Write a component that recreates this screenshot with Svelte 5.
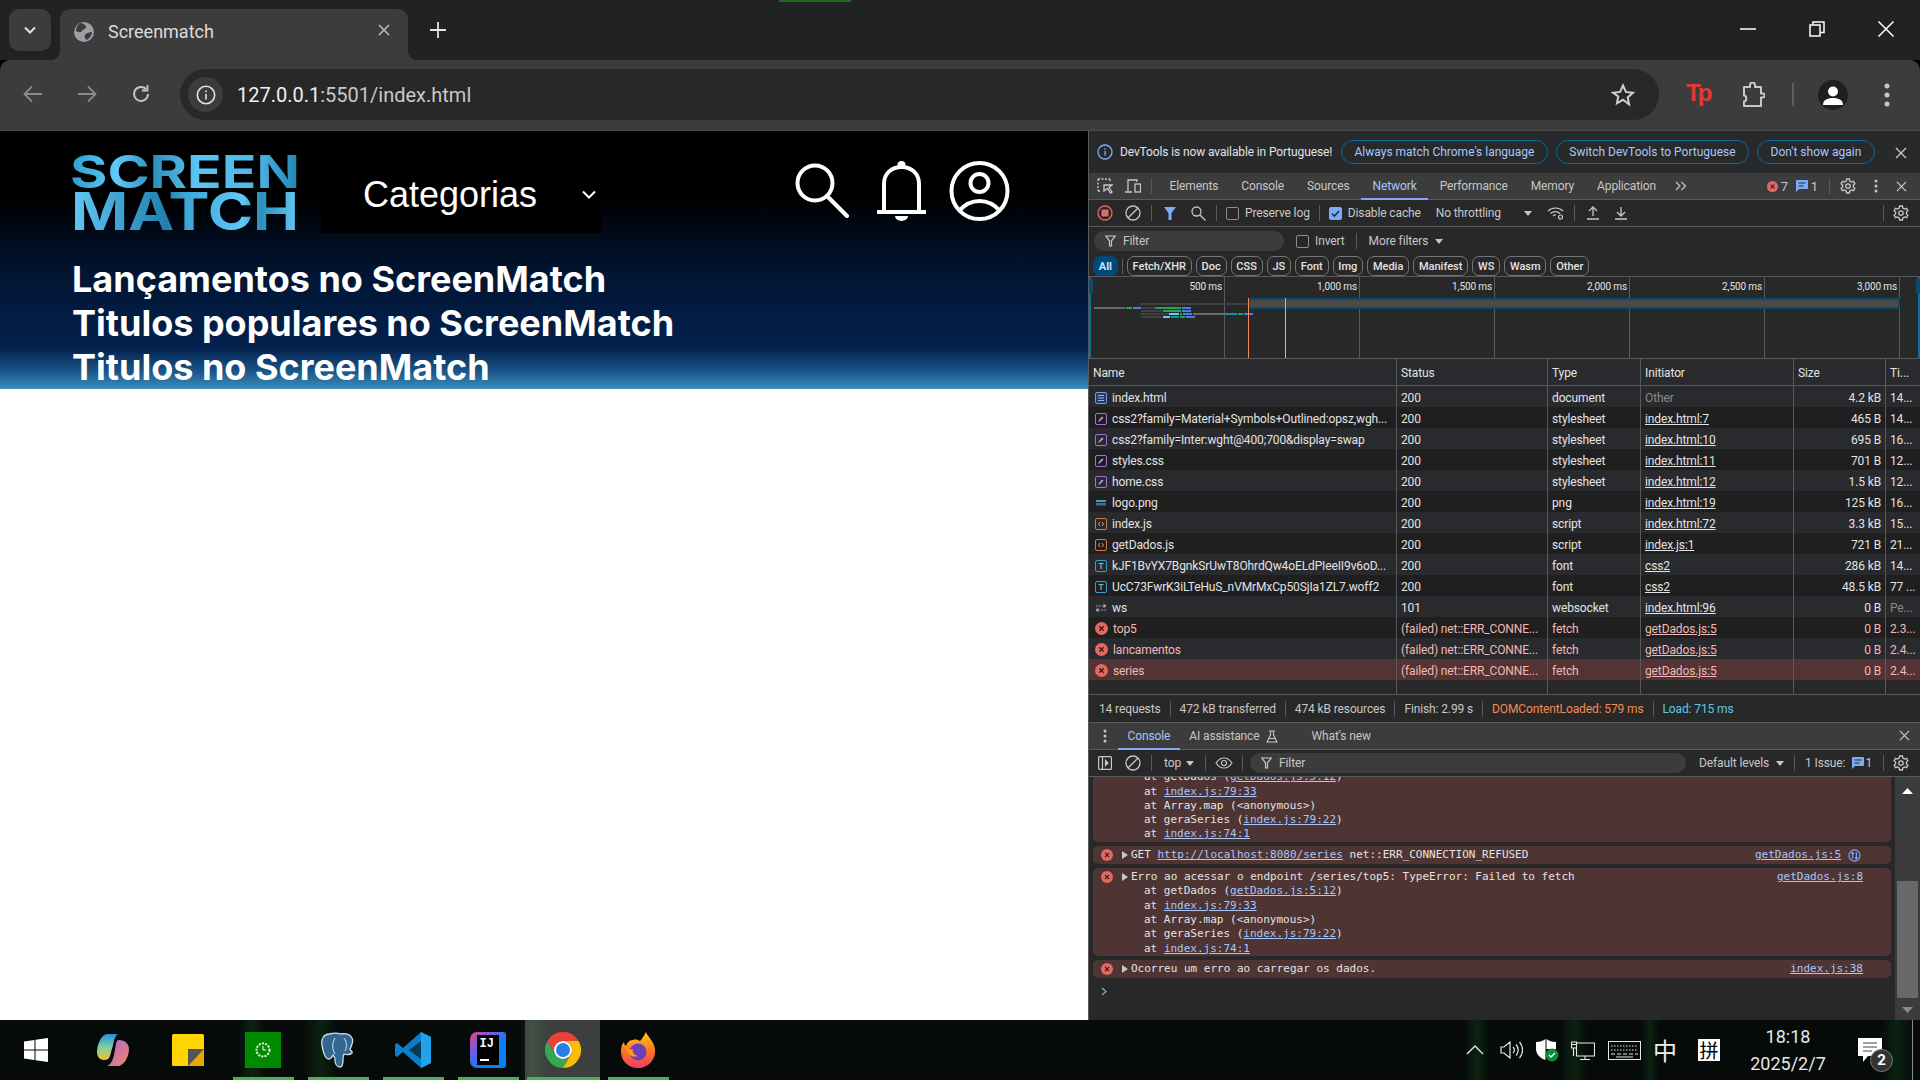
<script>
  const chips = ['Fetch/XHR', 'Doc', 'CSS', 'JS', 'Font', 'Img', 'Media', 'Manifest', 'WS', 'Wasm', 'Other'];
  const ticks = [
    { x: 135, label: '500 ms' },
    { x: 270, label: '1,000 ms' },
    { x: 405, label: '1,500 ms' },
    { x: 540, label: '2,000 ms' },
    { x: 675, label: '2,500 ms' },
    { x: 810, label: '3,000 ms' }
  ];
  const gray = '#6a6a6a', dark = '#3f3f3f', green = '#27a35a', blue = '#4a7fe0', teal = '#0f93b0', cyan = '#5fd0f0';
  const bars = [
    [51, 105, 26, dark], [106, 158, 26, dark],
    [5, 36, 30, gray], [37, 43, 30, green], [44, 53, 30, blue],
    [52, 66, 30, dark], [66, 69, 30, teal], [69, 92, 30, green], [93, 102, 30, blue],
    [52, 73, 33, dark], [74, 92, 33, green], [93, 102, 33, blue],
    [52, 80, 36, dark], [80, 90, 36, cyan], [91, 93, 36, green], [94, 103, 36, blue],
    [104, 136, 36, gray], [136, 148, 36, teal], [149, 154, 36, green], [155, 164, 36, blue],
    [52, 73, 39, dark], [74, 81, 39, cyan], [82, 90, 39, teal], [91, 96, 39, green], [97, 106, 39, blue]
  ];
  const failed = '(failed) net::ERR_CONNE...';
  const rows = [
    { kind: 'doc', name: 'index.html', status: '200', type: 'document', init: 'Other', size: '4.2 kB', time: '14...' },
    { kind: 'css', name: 'css2?family=Material+Symbols+Outlined:opsz,wgh...', status: '200', type: 'stylesheet', init: 'index.html:7', size: '465 B', time: '14...' },
    { kind: 'css', name: 'css2?family=Inter:wght@400;700&display=swap', status: '200', type: 'stylesheet', init: 'index.html:10', size: '695 B', time: '16...' },
    { kind: 'css', name: 'styles.css', status: '200', type: 'stylesheet', init: 'index.html:11', size: '701 B', time: '12...' },
    { kind: 'css', name: 'home.css', status: '200', type: 'stylesheet', init: 'index.html:12', size: '1.5 kB', time: '12...' },
    { kind: 'img', name: 'logo.png', status: '200', type: 'png', init: 'index.html:19', size: '125 kB', time: '16...' },
    { kind: 'js', name: 'index.js', status: '200', type: 'script', init: 'index.html:72', size: '3.3 kB', time: '15...' },
    { kind: 'js', name: 'getDados.js', status: '200', type: 'script', init: 'index.js:1', size: '721 B', time: '21...' },
    { kind: 'font', name: 'kJF1BvYX7BgnkSrUwT8OhrdQw4oELdPIeeII9v6oD...', status: '200', type: 'font', init: 'css2', size: '286 kB', time: '14...' },
    { kind: 'font', name: 'UcC73FwrK3iLTeHuS_nVMrMxCp50SjIa1ZL7.woff2', status: '200', type: 'font', init: 'css2', size: '48.5 kB', time: '77 ...' },
    { kind: 'ws', name: 'ws', status: '101', type: 'websocket', init: 'index.html:96', size: '0 B', time: 'Pe...' },
    { kind: 'err', name: 'top5', status: failed, type: 'fetch', init: 'getDados.js:5', size: '0 B', time: '2.3...' },
    { kind: 'err', name: 'lancamentos', status: failed, type: 'fetch', init: 'getDados.js:5', size: '0 B', time: '2.4...' },
    { kind: 'err', name: 'series', status: failed, type: 'fetch', init: 'getDados.js:5', size: '0 B', time: '2.4...', selected: true }
  ];
  const summary = ['14 requests', '472 kB transferred', '474 kB resources', 'Finish: 2.99 s'];
  const stack = [
    ['getDados (', 'getDados.js:5:12', ')'],
    ['', 'index.js:79:33', ''],
    ['Array.map (<anonymous>)', '', ''],
    ['geraSeries (', 'index.js:79:22', ')'],
    ['', 'index.js:74:1', '']
  ];
  const stripes = [
    { x: 237, w: 30 }, { x: 303, w: 36 }, { x: 518, w: 30 }, { x: 1463, w: 28 }, { x: 1560, w: 28 }, { x: 1640, w: 20 }, { x: 1880, w: 34 }
  ];
</script>

{#snippet x(size = 12)}
  <svg width={size} height={size} viewBox="0 0 12 12"><path d="M1 1l10 10M11 1L1 11" stroke="#c7c7c7" stroke-width="1.4" fill="none"/></svg>
{/snippet}

{#snippet errDot(size = 13)}
  <svg width={size} height={size} viewBox="0 0 14 14"><circle cx="7" cy="7" r="7" fill="#e46962"/><path d="M4.6 4.6l4.8 4.8M9.4 4.6l-4.8 4.8" stroke="#3b1a18" stroke-width="1.4"/></svg>
{/snippet}

{#snippet gear()}
  <svg width="16" height="16" viewBox="0 0 16 16" fill="none" stroke="#c7c7c7" stroke-width="1.3"><path d="M6.6 1h2.8l.4 2 1.8 1 1.9-.7 1.4 2.4-1.5 1.4v1.8l1.5 1.4-1.4 2.4-1.9-.7-1.8 1-.4 2H6.6l-.4-2-1.8-1-1.9.7-1.4-2.4 1.5-1.4V7.100L1.100 5.700l1.400-2.400 1.900.7 1.800-1z"/><circle cx="8" cy="8" r="2.2"/></svg>
{/snippet}

{#snippet dots()}
  <svg width="4" height="14" viewBox="0 0 4 14" fill="#c7c7c7"><circle cx="2" cy="2" r="1.5"/><circle cx="2" cy="7" r="1.5"/><circle cx="2" cy="12" r="1.5"/></svg>
{/snippet}

{#snippet clear()}
  <svg width="16" height="16" viewBox="0 0 16 16" fill="none" stroke="#c7c7c7" stroke-width="1.3"><circle cx="8" cy="8" r="7"/><path d="M3.2 12.8L12.800 3.200"/></svg>
{/snippet}

{#snippet funnel(color = '#c7c7c7')}
  <svg width="11" height="12" viewBox="0 0 11 12" fill="none" stroke={color} stroke-width="1.2"><path d="M.8 1h9.400L6.500 5.800V11H4.500V5.800z"/></svg>
{/snippet}

{#snippet msg()}
  <svg width="12" height="12" viewBox="0 0 12 12"><path d="M1 0h10a1 1 0 0 1 1 1v7a1 1 0 0 1-1 1H3l-3 3V1a1 1 0 0 1 1-1z" fill="#7cacf8"/><path d="M2.500 3h7M2.500 6h5" stroke="#28292b" stroke-width="1.1"/></svg>
{/snippet}

{#snippet fileIcon(kind)}
  {#if kind === 'doc'}
    <svg width="12" height="12" viewBox="0 0 12 12" fill="none"><rect x=".5" y=".5" width="11" height="11" rx="1.5" fill="#2a3a5c" stroke="#6f9be8"/><path d="M3 3.500h6M3 6h6M3 8.500h6" stroke="#8fb4f5"/></svg>
  {:else if kind === 'css'}
    <svg width="12" height="12" viewBox="0 0 12 12" fill="none"><rect x=".5" y=".5" width="11" height="11" rx="1.5" stroke="#a673d4"/><path d="M3 9l1-2 3-3.500 1.500 1.300L5 8z" fill="#c69df0"/></svg>
  {:else if kind === 'img'}
    <svg width="12" height="12" viewBox="0 0 12 12"><rect x="1" y="3" width="10" height="2" fill="#3aa0c8"/><rect x="1" y="6" width="10" height="2.500" fill="#2d7796"/></svg>
  {:else if kind === 'js'}
    <svg width="12" height="12" viewBox="0 0 12 12" fill="none"><rect x=".5" y=".5" width="11" height="11" rx="1.5" stroke="#d17a45"/><path d="M5 4L3.500 6 5 8M7 4l1.500 2L7 8" stroke="#e8965f"/></svg>
  {:else if kind === 'font'}
    <svg width="12" height="12" viewBox="0 0 12 12" fill="none"><rect x=".5" y=".5" width="11" height="11" rx="1.5" stroke="#3d9fc0"/><path d="M3.500 3.500h5M6 3.500v5.500" stroke="#63bdda" stroke-width="1.2"/></svg>
  {:else if kind === 'ws'}
    <svg width="12" height="12" viewBox="0 0 12 12" fill="none" stroke="#bdbdbd"><path d="M1 4h1.500M4 4h1.500M7 4h3M8.500 2L11 4 8.500 5.500" /><path d="M11 8H9.500M8 8H6.500M5 8H2M3.500 6L1 8l2.500 1.500"/></svg>
  {:else}
    {@render errDot(13)}
  {/if}
{/snippet}

<div class="screen">
  <div class="tabstrip">
    <div class="tablist">
      <svg width="12" height="8" viewBox="0 0 12 8" fill="none" stroke="#e3e3e3" stroke-width="2"><path d="M1 1.500l5 5 5-5"/></svg>
    </div>
    <div class="tab">
      <svg class="favicon" width="20" height="20" viewBox="0 0 20 20"><circle cx="10" cy="10" r="10" fill="#9aa0a6"/><path d="M7 1c3 1 5 2 5 4s-3 2-4 4-4 1-6 0c0-4 2-7 5-8zM18 10c0 3-2 6-5 8-2-1-3-3-2-5s5-3 7-3z" fill="#3c3c3c"/></svg>
      <span class="tabtitle">Screenmatch</span>
      <span class="tabclose">{@render x(12)}</span>
    </div>
    <svg class="plus" width="16" height="16" viewBox="0 0 16 16" stroke="#e3e3e3" stroke-width="1.8"><path d="M8 0v16M0 8h16"/></svg>
    <div class="wincontrols">
      <svg width="16" height="2" viewBox="0 0 16 2"><path d="M0 1h16" stroke="#fff" stroke-width="1.5"/></svg>
      <svg width="16" height="16" viewBox="0 0 16 16" fill="none" stroke="#fff" stroke-width="1.5"><rect x="1" y="4" width="10" height="11"/><path d="M4 3.500V1h11v10.500h-3.500"/></svg>
      <svg width="16" height="16" viewBox="0 0 16 16" fill="none" stroke="#fff" stroke-width="1.5"><path d="M.5.500l15 15M15.500.500l-15 15"/></svg>
    </div>
    <span class="greenmark"></span>
  </div>

  <div class="toolbar">
    <svg class="nav" width="20" height="18" viewBox="0 0 20 18" fill="none" stroke="#8a8a8a" stroke-width="1.8"><path d="M19 9H2M9 1.500L1.500 9 9 16.500"/></svg>
    <svg class="nav fwd" width="20" height="18" viewBox="0 0 20 18" fill="none" stroke="#8a8a8a" stroke-width="1.8"><path d="M1 9h17M11 1.500L18.500 9 11 16.500"/></svg>
    <svg class="nav fwd" width="20" height="20" viewBox="0 0 20 20" fill="none" stroke="#c7c7c7" stroke-width="2"><path d="M17 10a7 7 0 1 1-2-5"/><path d="M16.500 1v5.500H11" stroke-width="1.8"/></svg>
    <div class="omnibox">
      <div class="infochip">
        <svg width="20" height="20" viewBox="0 0 20 20" fill="none" stroke="#e3e3e3" stroke-width="1.6"><circle cx="10" cy="10" r="8.700"/><path d="M10 9v5.500M10 5.500v1.800"/></svg>
      </div>
      <span class="url"><b>127.0.0.1</b>:5501/index.html</span>
      <svg class="star" width="24" height="24" viewBox="0 0 24 24" fill="none" stroke="#d0d0d0" stroke-width="2"><path d="M12 2.500l2.900 6.400 7 .8-5.200 4.700 1.400 6.900L12 16.800l-6.100 3.500 1.400-6.900L2.100 9.700l7-.8z"/></svg>
    </div>
    <span class="tp">Tp</span>
    <svg class="puzzle" width="24" height="26" viewBox="0 0 24 26" fill="none" stroke="#c7c7c7" stroke-width="2"><path d="M3 5h6V3a2.500 2.500 0 0 1 5 0v2h6v6.500h1.500a2 2 0 0 1 0 4H20V24H3v-4.500c3 0 3-6 0-6z" stroke-linejoin="round"/></svg>
    <span class="tooldiv"></span>
    <div class="avatar">
      <svg width="20" height="20" viewBox="0 0 20 20" fill="#fff"><circle cx="10" cy="6.500" r="5"/><path d="M0 20c0-5 4-7 10-7s10 2 10 7z"/></svg>
    </div>
    <svg class="menu" width="6" height="24" viewBox="0 0 6 24" fill="#c7c7c7"><circle cx="3" cy="3" r="2.5"/><circle cx="3" cy="12" r="2.5"/><circle cx="3" cy="21" r="2.5"/></svg>
  </div>

  <div class="main">
    <section class="page">
      <div class="hero">
        <header class="pagehead">
          <svg class="logo" width="230" height="76" viewBox="0 0 230 76">
            <defs>
              <linearGradient id="lg1" gradientUnits="userSpaceOnUse" x1="0" x2="230" y1="0" y2="0">
                <stop offset="0" stop-color="#2b9fd0"/><stop offset=".2" stop-color="#62c9f6"/><stop offset=".36" stop-color="#2a8fbb"/><stop offset=".55" stop-color="#5cc4f0"/><stop offset=".8" stop-color="#4fb8e6"/><stop offset="1" stop-color="#1f84b2"/>
              </linearGradient>
              <linearGradient id="lg2" gradientUnits="userSpaceOnUse" x1="0" x2="230" y1="0" y2="0">
                <stop offset="0" stop-color="#62c9f6"/><stop offset=".42" stop-color="#1f80ae"/><stop offset=".5" stop-color="#3aa6d6"/><stop offset=".75" stop-color="#62c9f6"/><stop offset=".83" stop-color="#2a8fbb"/><stop offset="1" stop-color="#66ccf8"/>
              </linearGradient>
            </defs>
            <text class="logotext" x="0" y="33" font-size="45" fill="url(#lg1)" textLength="230" lengthAdjust="spacingAndGlyphs">SCREEN</text>
            <text class="logotext" x="1" y="75" font-size="52" fill="url(#lg2)" textLength="228" lengthAdjust="spacingAndGlyphs">MATCH</text>
          </svg>
          <div class="categorias">
            <span>Categorias</span>
            <svg width="14" height="9" viewBox="0 0 14 9" fill="none" stroke="#fff" stroke-width="2"><path d="M1 1.500l6 6 6-6"/></svg>
          </div>
          <div class="headicons">
            <svg width="54" height="55" viewBox="0 0 54 55" fill="none" stroke="#fff" stroke-width="4"><circle cx="20" cy="20" r="17.500"/><path d="M32 33l20 20" stroke-linecap="round"/></svg>
            <svg class="bell" width="49" height="60" viewBox="0 0 49 60" fill="none" stroke="#fff" stroke-width="4"><path d="M0 51h49M7 51V23C7 12 15 6 24.500 6S42 12 42 23v28"/><circle cx="24.500" cy="4" r="4" fill="#fff" stroke="none"/><path d="M18 55h13a6.500 5 0 0 1-13 0z" fill="#fff" stroke="none"/></svg>
            <svg class="person" width="61" height="60" viewBox="0 0 61 60" fill="none" stroke="#fff" stroke-width="4"><circle cx="30.500" cy="30" r="28"/><circle cx="30.500" cy="22" r="9"/><path d="M10 50c6-7 13-10 20.500-10S45 43 51 50"/></svg>
          </div>
        </header>
        <h2>Lançamentos no ScreenMatch</h2>
        <h2>Titulos populares no ScreenMatch</h2>
        <h2>Titulos no ScreenMatch</h2>
      </div>
    </section>

    <section class="devtools">
      <div class="infobar">
        <svg class="infoicon" width="16" height="16" viewBox="0 0 16 16" fill="none" stroke="#7cacf8" stroke-width="1.3"><circle cx="8" cy="8" r="7"/><path d="M8 7v4.500M8 4.200v1.500"/></svg>
        <span class="infotext">DevTools is now available in Portuguese!</span>
        <button class="pill">Always match Chrome's language</button>
        <button class="pill">Switch DevTools to Portuguese</button>
        <button class="pill">Don't show again</button>
        <span class="infoclose">{@render x(12)}</span>
      </div>

      <div class="tabsbar">
        <span class="ib">
          <svg width="16" height="16" viewBox="0 0 16 16" fill="none" stroke="#c7c7c7" stroke-width="1.3"><path d="M1 1h12M1 1v12M1 13h2M13 1v3" stroke-dasharray="2 1.5"/><path d="M7 7l8 0-3 2.500 3 4.500-1.500 1-3-4.500L7 13z"/></svg>
        </span>
        <span class="ib">
          <svg width="16" height="14" viewBox="0 0 16 14" fill="none" stroke="#c7c7c7" stroke-width="1.3"><path d="M3 12V1h9v2M0 13h7"/><rect x="10" y="5" width="5.500" height="8"/></svg>
        </span>
        <span class="vdiv first"></span>
        <span class="dtab">Elements</span>
        <span class="dtab">Console</span>
        <span class="dtab">Sources</span>
        <span class="dtab active">Network</span>
        <span class="dtab">Performance</span>
        <span class="dtab">Memory</span>
        <span class="dtab">Application</span>
        <svg class="more" width="12" height="10" viewBox="0 0 12 10" fill="none" stroke="#c7c7c7" stroke-width="1.2"><path d="M1 1l4 4-4 4M6.500 1l4 4-4 4"/></svg>
        <span class="counters">
          {@render errDot(11)}<span class="cnt">7</span>
          <span class="msgicon">{@render msg()}</span><span class="cnt">1</span>
        </span>
        <span class="vdiv countdiv"></span>
        <span class="ib gearbtn">{@render gear()}</span>
        <span class="ib">{@render dots()}</span>
        <span class="ib lastclose">{@render x(11)}</span>
      </div>

      <div class="nettools">
        <span class="ib">
          <svg width="16" height="16" viewBox="0 0 16 16" fill="none"><circle cx="8" cy="8" r="7" stroke="#e46962" stroke-width="1.3"/><rect x="4.500" y="4.500" width="7" height="7" rx="1" fill="#e46962"/></svg>
        </span>
        <span class="ib">{@render clear()}</span>
        <span class="vdiv first"></span>
        <span class="ib">
          <svg width="14" height="13" viewBox="0 0 14 13" fill="#7cacf8"><path d="M1 0h12L8.500 6v7h-3V6z"/></svg>
        </span>
        <span class="ib">
          <svg width="15" height="15" viewBox="0 0 15 15" fill="none" stroke="#c7c7c7" stroke-width="1.3"><circle cx="5.500" cy="5.500" r="4.500"/><path d="M9 9l5.500 5.500"/></svg>
        </span>
        <span class="vdiv first"></span>
        <span class="cb preserve"></span><span class="lbl">Preserve log</span>
        <span class="vdiv cachediv"></span>
        <span class="cb checked">
          <svg width="11" height="11" viewBox="0 0 11 11" fill="none" stroke="#1f2b40" stroke-width="1.6"><path d="M2 5.500l2.500 2.500L9 3"/></svg>
        </span>
        <span class="lbl">Disable cache</span>
        <span class="lbl throttle">No throttling</span>
        <svg class="tri" width="8" height="5" viewBox="0 0 8 5" fill="#c7c7c7"><path d="M0 0h8L4 5z"/></svg>
        <span class="ib wifi">
          <svg width="17" height="14" viewBox="0 0 17 14" fill="none" stroke="#c7c7c7" stroke-width="1.2"><path d="M1 5c4-4 11-4 15 0M3.500 7.500c2.500-2.500 7-2.500 9.500 0M6 10c1-1 2-1.200 3-1"/><circle cx="13.500" cy="11" r="2"/></svg>
        </span>
        <span class="vdiv first"></span>
        <span class="ib">
          <svg width="12" height="14" viewBox="0 0 12 14" fill="none" stroke="#c7c7c7" stroke-width="1.3"><path d="M6 10V1M2 5l4-4 4 4M0 13h12"/></svg>
        </span>
        <span class="ib">
          <svg width="12" height="14" viewBox="0 0 12 14" fill="none" stroke="#c7c7c7" stroke-width="1.3"><path d="M6 1v9M2 6l4 4 4-4M0 13h12"/></svg>
        </span>
        <span class="vdiv pushright"></span>
        <span class="ib">{@render gear()}</span>
      </div>

      <div class="filterrow">
        <div class="filterinput">{@render funnel()}<span>Filter</span></div>
        <span class="cb invert"></span><span class="lbl">Invert</span>
        <span class="vdiv morediv"></span>
        <span class="lbl morefilters">More filters</span>
        <svg class="tri" width="8" height="5" viewBox="0 0 8 5" fill="#c7c7c7"><path d="M0 0h8L4 5z"/></svg>
      </div>

      <div class="chips">
        <span class="chip all">All</span>
        <span class="vdiv chipdiv"></span>
        {#each chips as c}
          <span class="chip">{c}</span>
        {/each}
      </div>

      <div class="timeline">
        {#each ticks as t}
          <span class="gridline" style="left:{t.x}px"></span>
          <span class="ticklabel" style="right:{832 - t.x + 1}px">{t.label}</span>
        {/each}
        <span class="overbar"></span>
        {#each bars as b}
          <span class="bar" style="left:{b[0]}px;width:{b[1] - b[0]}px;top:{b[2]}px;background:{b[3]}"></span>
        {/each}
        <span class="marker orange"></span>
        <span class="marker sky"></span>
        <span class="handle left"></span>
        <span class="handle right"></span>
      </div>

      <div class="table">
        <div class="row head">
          <div>Name</div><div>Status</div><div>Type</div><div>Initiator</div><div>Size</div><div>Ti...</div>
        </div>
        {#each rows as r, i}
          <div class="row" class:alt={i % 2 === 1} class:failed={r.kind === 'err'} class:selected={r.selected}>
            <div class="namecell">{@render fileIcon(r.kind)}<span>{r.name}</span></div>
            <div>{r.status}</div>
            <div>{r.type}</div>
            <div class:other={r.init === 'Other'} class:lnk={r.init !== 'Other'}>{r.init}</div>
            <div class="right">{r.size}</div>
            <div class:other={r.time === 'Pe...'}>{r.time}</div>
          </div>
        {/each}
        <div class="row filler"><div></div><div></div><div></div><div></div><div></div><div></div></div>
      </div>

      <div class="statusbar">
        {#each summary as s}
          <span class="sitem">{s}</span>
        {/each}
        <span class="sitem dcl">DOMContentLoaded: 579 ms</span>
        <span class="sitem load">Load: 715 ms</span>
      </div>

      <div class="drawertabs">
        <span class="ib">{@render dots()}</span>
        <span class="dtab drawer first active">Console</span>
        <span class="dtab drawer">AI assistance
          <svg class="flask" width="12" height="13" viewBox="0 0 12 13" fill="none" stroke="#c7c7c7" stroke-width="1.1"><path d="M3 1h6M4.500 1v4L1 12h10L7.500 5V1M3 8.500h6"/></svg>
        </span>
        <span class="dtab drawer whatsnew">What's new</span>
        <span class="drawerclose">{@render x(11)}</span>
      </div>

      <div class="contools">
        <span class="ib">
          <svg width="14" height="14" viewBox="0 0 14 14" fill="none" stroke="#c7c7c7" stroke-width="1.2"><rect x=".6" y=".6" width="12.800" height="12.800" rx="1"/><path d="M4.500 1v12"/><path d="M7.500 4.500L10 7l-2.500 2.500z" fill="#c7c7c7"/></svg>
        </span>
        <span class="ib">{@render clear()}</span>
        <span class="vdiv first"></span>
        <span class="lbl topctx">top</span>
        <svg class="tri" width="8" height="5" viewBox="0 0 8 5" fill="#c7c7c7"><path d="M0 0h8L4 5z"/></svg>
        <span class="vdiv topdiv"></span>
        <svg class="eye" width="18" height="12" viewBox="0 0 18 12" fill="none" stroke="#c7c7c7" stroke-width="1.2"><path d="M1 6c2-3 5-5 8-5s6 2 8 5c-2 3-5 5-8 5S3 9 1 6z"/><circle cx="9" cy="6" r="2.500"/></svg>
        <span class="vdiv eyediv"></span>
        <div class="confilter">{@render funnel()}<span>Filter</span></div>
        <span class="lbl levels">Default levels</span>
        <svg class="tri" width="8" height="5" viewBox="0 0 8 5" fill="#c7c7c7"><path d="M0 0h8L4 5z"/></svg>
        <span class="vdiv levdiv"></span>
        <span class="lbl issue">1 Issue:</span>
        <span class="issueicon">{@render msg()}</span>
        <span class="lbl issuenum">1</span>
        <span class="vdiv issuediv"></span>
        <span class="ib">{@render gear()}</span>
      </div>

      <div class="conarea">
        <div class="messages">
          <div class="msgblock">
            {#each stack as l}
              <div class="at">at {l[0]}{#if l[1]}<a href="#top">{l[1]}</a>{/if}{l[2]}</div>
            {/each}
          </div>
          <div class="msgblock single">
            <div class="mline">
              {@render errDot(12)}
              <span class="expand"></span>
              <span>GET <a href="#top">http://localhost:8080/series</a> net::ERR_CONNECTION_REFUSED</span>
              <a class="src net" href="#top">getDados.js:5</a>
              <svg class="netic" width="13" height="13" viewBox="0 0 14 14" fill="none" stroke="#7cacf8" stroke-width="1.2"><circle cx="7" cy="7" r="6"/><path d="M5 3.500v7M3.500 5L5 3.500 6.500 5M9 10.500v-7M7.500 9L9 10.500 10.500 9"/></svg>
            </div>
          </div>
          <div class="msgblock">
            <div class="mline">
              {@render errDot(12)}
              <span class="expand"></span>
              <span>Erro ao acessar o endpoint /series/top5: TypeError: Failed to fetch</span>
              <a class="src" href="#top">getDados.js:8</a>
            </div>
            {#each stack as l}
              <div class="at">at {l[0]}{#if l[1]}<a href="#top">{l[1]}</a>{/if}{l[2]}</div>
            {/each}
          </div>
          <div class="msgblock single">
            <div class="mline">
              {@render errDot(12)}
              <span class="expand"></span>
              <span>Ocorreu um erro ao carregar os dados.</span>
              <a class="src" href="#top">index.js:38</a>
            </div>
          </div>
          <div class="prompt">
            <svg width="6" height="9" viewBox="0 0 6 9" fill="none" stroke="#7cacf8" stroke-width="1.2"><path d="M1 1l4 3.500L1 8"/></svg>
          </div>
        </div>
        <div class="scrollbar">
          <svg class="up" width="11" height="6" viewBox="0 0 11 6" fill="#fff"><path d="M5.500 0L11 6H0z"/></svg>
          <span class="thumb"></span>
          <svg class="down" width="11" height="6" viewBox="0 0 11 6" fill="#8a8a8a"><path d="M0 0h11L5.500 6z"/></svg>
        </div>
      </div>
    </section>
  </div>

  <footer class="taskbar">
    {#each stripes as s}
      <span class="stripe" style="left:{s.x}px;width:{s.w}px"></span>
    {/each}
    <div class="slot">
      <svg class="winlogo" width="24" height="24" viewBox="0 0 24 24" fill="#fff"><path d="M0 3.500L10.500 2v9.500H0zM11.500 1.800L24 0v11.500H11.500zM0 12.500h10.500V22L0 20.500zM11.500 12.500H24V24l-12.500-1.800z"/></svg>
    </div>
    <div class="slot">
      <svg width="34" height="34" viewBox="0 0 34 34">
        <defs>
          <linearGradient id="cp1" x1="0" y1="0" x2="0" y2="1"><stop offset="0" stop-color="#1f8fe0"/><stop offset=".5" stop-color="#7fd0a0"/><stop offset="1" stop-color="#f0c040"/></linearGradient>
          <linearGradient id="cp2" x1="0" y1="0" x2="1" y2="1"><stop offset="0" stop-color="#b060e0"/><stop offset="1" stop-color="#f08a60"/></linearGradient>
        </defs>
        <path d="M11 1h11c-3 2-4 6-5 11l-3 11c-1 3-3 4-6 4-5 0-7-4-7-8C1 11 6 1 11 1z" fill="url(#cp1)"/>
        <path d="M23 7c6 0 10 4 10 9 0 9-6 17-11 17H11c4-2 6-6 7-11l2-11c.5-3 1-4 3-4z" fill="url(#cp2)"/>
      </svg>
    </div>
    <div class="slot">
      <svg width="32" height="32" viewBox="0 0 32 32"><rect width="32" height="32" rx="1.5" fill="#ffd400"/><path d="M32 15v17H16c0-9 7-17 16-17z" fill="#e8a800"/><path d="M32 15L16 32V15z" fill="#555"/></svg>
    </div>
    <div class="slot on">
      <svg width="36" height="36" viewBox="0 0 36 36"><rect width="36" height="36" fill="#008a00"/><circle cx="18" cy="18" r="6.500" fill="none" stroke="#e8f5e8" stroke-width="2" stroke-dasharray="2 1.2"/><path d="M18 14v4h3" stroke="#fff" fill="none"/></svg>
    </div>
    <div class="slot on">
      <svg width="36" height="36" viewBox="0 0 36 36"><path d="M9 2c-5 0-8 5-7 11 1 7 3 14 7 14 2 0 3-2 4-4 1 1 2 2 2 5 0 4 2 7 5 7 2 0 3-3 3-7 0-3 0-4 1-6 3 1 6 1 8-1 1-2-2-2-2-4 2-4 4-8 2-11-2-4-7-5-11-4-3-1-8-1-12 0z" fill="#336791" stroke="#cfe0ee" stroke-width="1.3"/><path d="M15 6c-3 5-3 11 0 16M24 6c3 4 3 9 1 13" fill="none" stroke="#cfe0ee"/></svg>
    </div>
    <div class="slot on">
      <svg width="36" height="36" viewBox="0 0 36 36"><path d="M26 0l10 5v26l-10 5L8 20l-6 5-2-1.500V12.500L2 11l6 5z" fill="#0a7ec8"/><path d="M26 0l10 5v26l-10 5z" fill="#1fa3ea"/><path d="M26 9L14 18l12 9z" fill="#000" opacity=".55"/></svg>
    </div>
    <div class="slot on split">
      <div class="ij"><span class="ijbox"><span>IJ</span><i></i></span></div>
    </div>
    <div class="slot on active">
      <svg width="36" height="36" viewBox="6 6 36 36">
        <path d="M39.590 15A18 18 0 0 0 8.410 15L16.200 28.500A9 9 0 0 1 24 15z" fill="#ea4335"/>
        <path d="M8.410 15A18 18 0 0 0 24 42L31.800 28.500A9 9 0 0 1 16.200 28.500z" fill="#34a853"/>
        <path d="M24 42A18 18 0 0 0 39.590 15L24 15A9 9 0 0 1 31.800 28.500z" fill="#fbbc04"/>
        <circle cx="24" cy="24" r="9" fill="#fff"/><circle cx="24" cy="24" r="7" fill="#2b7de9"/>
      </svg>
    </div>
    <div class="slot on split">
      <svg width="36" height="36" viewBox="0 0 36 36">
        <defs>
          <linearGradient id="ff" x1="0" y1="0" x2="0" y2="1"><stop offset="0" stop-color="#ffc928"/><stop offset=".5" stop-color="#ff7a1a"/><stop offset="1" stop-color="#f03a6a"/></linearGradient>
        </defs>
        <path d="M26 0c1 4 8 9 9 17 1 11-7 19-17 19S1 29 1 19c0-4 1-7 3-9 0 2 1 3 2 4 1-3 3-6 7-6 3-1 5 0 7 1 2-2 4-5 6-9z" fill="url(#ff)"/>
        <circle cx="18" cy="20" r="8.500" fill="#6a3fb8"/><path d="M5 14c2 4 6 4 8 3-1 3 1 6 5 7-5 2-11-1-13-10z" fill="#ff9a1a"/>
      </svg>
    </div>

    <div class="tray">
      <svg class="t-chev" width="18" height="10" viewBox="0 0 18 10" fill="none" stroke="#e8e8e8" stroke-width="1.3"><path d="M1 9l8-8 8 8"/></svg>
      <svg class="t-spk" width="23" height="20" viewBox="0 0 23 20" fill="none" stroke="#e8e8e8" stroke-width="1.2"><path d="M1 7h3l6-5v16l-6-5H1zM13 7a4 4 0 0 1 0 6M16 4.500a8 8 0 0 1 0 11M19.500 2a12 12 0 0 1 0 16"/></svg>
      <svg class="t-shield" width="24" height="24" viewBox="0 0 24 24"><path d="M10.500 1C8 3 5 4 1 4v7c0 5 4 9 9.500 11z" fill="#fff"/><path d="M11.500 1C14 3 17 4 21 4v7H11.500z" fill="#fff"/><circle cx="17" cy="17" r="6.500" fill="#10893e"/><path d="M14 17l2 2 4-4" stroke="#fff" stroke-width="1.3" fill="none"/></svg>
      <svg class="t-mon" width="24" height="19" viewBox="0 0 24 19" fill="none" stroke="#e8e8e8" stroke-width="1.1"><path d="M.5 1h5v6h-5zM5.500 2H23.500v13H5.500zM2.500 7v8M14 15v3M9 18.500h10M.5 3.500h5"/></svg>
      <svg class="t-kbd" width="33" height="19" viewBox="0 0 33 19" fill="none" stroke="#e8e8e8" stroke-width="1"><rect x=".5" y=".5" width="32" height="18"/><path d="M3 5h27M3 9h27" stroke-dasharray="1.5 1.5"/><path d="M3 13h27" stroke-dasharray="4 2"/><path d="M8 16h17"/></svg>
      <span class="t-ime">中</span>
      <span class="t-pin">拼</span>
      <div class="clock"><div>18:18</div><div>2025/2/7</div></div>
      <div class="notif">
        <svg width="24" height="24" viewBox="0 0 24 24" fill="#fff"><path d="M0 0h24v18H10l-5 6v-6H0z"/><path d="M5 5h14M5 9h14M5 13h9" stroke="#444" stroke-width="1"/></svg>
        <span class="badge">2</span>
      </div>
      <span class="showdesk"></span>
    </div>
  </footer>
</div>

<style>
  :global(body) { margin: 0; background: #000; }
  .screen { width: 1920px; height: 1080px; display: flex; flex-direction: column; overflow: hidden; font-family: Roboto, "Liberation Sans", sans-serif; }
  svg { display: block; flex: none; }

  /* chrome */
  .tabstrip { height: 60px; background: #212322; display: flex; align-items: flex-start; position: relative; flex: none; }
  .tablist { width: 42px; height: 42px; margin: 9px 0 0 9px; background: #3c3c3c; border-radius: 10px; display: flex; align-items: center; justify-content: center; }
  .tab { width: 348px; height: 51px; margin: 9px 0 0 9px; background: #3c3c3c; border-radius: 10px 10px 0 0; display: flex; align-items: center; position: relative; padding-bottom: 6px; box-sizing: border-box; }
  .tab::before, .tab::after { content: ""; position: absolute; bottom: 0; width: 10px; height: 10px; }
  .tab::before { left: -10px; background: radial-gradient(circle at 0 0, #212322 10px, #3c3c3c 10.5px); }
  .tab::after { right: -10px; background: radial-gradient(circle at 100% 0, #212322 10px, #3c3c3c 10.5px); }
  .favicon { margin-left: 14px; }
  .tabtitle { margin-left: 14px; font-size: 18px; color: #dcdcdc; }
  .tabclose { position: absolute; right: 18px; top: 15px; }
  .plus { margin: 22px 0 0 22px; }
  .wincontrols { margin-left: auto; display: flex; align-items: center; width: 154px; justify-content: space-between; padding: 21px 26px 0 0; height: 16px; }
  .greenmark { position: absolute; left: 779px; top: 0; width: 72px; height: 2px; background: #1e6b1e; }
  .toolbar { height: 71px; background: #3c3c3c; border-radius: 10px 10px 0 0; border-bottom: 1px solid #4a4a4a; box-sizing: border-box; display: flex; align-items: center; padding-bottom: 2px; position: relative; flex: none; }
  .nav { margin-left: 23px; }
  .nav.fwd { margin-left: 34px; }
  .omnibox { position: absolute; left: 180px; top: 9px; width: 1479px; height: 51px; background: #282828; border-radius: 26px; display: flex; align-items: center; }
  .infochip { width: 35px; height: 35px; margin-left: 8px; border-radius: 18px; background: #3c3c3c; display: flex; align-items: center; justify-content: center; }
  .url { margin-left: 14px; font-size: 20px; color: #c8c8c8; }
  .url b { font-weight: 400; color: #f0f0f0; }
  .star { margin-left: auto; margin-right: 24px; }
  .tp { position: absolute; left: 1686px; top: 21px; font: 700 24px/1 "Liberation Sans", sans-serif; color: #e53935; letter-spacing: -3px; }
  .puzzle { position: absolute; left: 1741px; top: 22px; }
  .tooldiv { position: absolute; left: 1792px; top: 23px; width: 2px; height: 23px; background: #5e5e5e; }
  .avatar { position: absolute; left: 1818px; top: 20px; width: 30px; height: 30px; border-radius: 50%; background: #1f1f1f; display: flex; align-items: center; justify-content: center; }
  .menu { position: absolute; left: 1884px; top: 23px; }

  .main { height: 889px; display: flex; flex: none; }
  .page { width: 1088px; background: #fff; flex: none; }
  .hero { height: 258px; overflow: hidden; background: linear-gradient(180deg, #000 0, #000 26%, #021533 55%, #03214d 84%, #1a5486 93%, #3c8fbe 100%); }
  .pagehead { height: 102px; box-sizing: border-box; padding: 24px 0 0 70px; display: flex; align-items: flex-start; }
  .logo { margin-right: 21px; }
  .logotext { font-family: Inter, sans-serif; font-weight: 700; }
  .categorias { width: 280px; height: 76px; margin-top: 2px; background: #000; display: flex; align-items: center; color: #fff; font: 36px "Liberation Sans", sans-serif; box-sizing: border-box; padding: 0 0 0 42px; flex: none; }
  .categorias svg { margin-left: 45px; margin-top: -2px; }
  .headicons { display: flex; margin-left: 194px; align-items: flex-start; }
  .headicons svg { margin-top: 8px; }
  .headicons .bell { margin: 6px 0 0 28px; }
  .headicons .person { margin: 6px 0 0 23px; }
  .hero h2 { margin: 0; padding-left: 72px; font: 700 36px/44px Inter, sans-serif; color: #fff; }
  .pagehead + h2 { margin-top: 24px; }

  /* devtools */
  .devtools { width: 832px; flex: none; background: #282828; border-left: 1px solid #5a5a5a; box-sizing: border-box; display: flex; flex-direction: column; font-size: 12px; color: #e3e3e3; letter-spacing: -.12px; }
  .infobar { height: 42px; flex: none; display: flex; align-items: center; background: #28292b; position: relative; }
  .infoicon { margin-left: 8px; }
  .infotext { margin-left: 7px; width: 221px; flex: none; }
  .pill { height: 24px; margin-right: 8px; padding: 0 12.5px; border: 1px solid #0c6a9c; border-radius: 12px; background: transparent; color: #a8c7fa; font: 12px Roboto, sans-serif; }
  .infoclose { position: absolute; right: 13px; top: 16px; }
  .tabsbar { height: 27px; flex: none; display: flex; align-items: center; background: #3c3c3c; border-bottom: 1px solid #5a5a5a; box-sizing: border-box; color: #c7c7c7; padding-left: 2px; }
  .ib { width: 28px; height: 100%; display: flex; align-items: center; justify-content: center; flex: none; }
  .vdiv { width: 1px; height: 16px; background: #5a5a5a; flex: none; }
  .vdiv.first { margin: 0 4px; }
  .dtab { padding: 0 11.5px; height: 100%; display: flex; align-items: center; box-sizing: border-box; white-space: nowrap; position: relative; }
  .tabsbar .vdiv.first { margin-right: 6px; }
  .dtab.active { color: #a8c7fa; }
  .dtab.active::after { content: ""; position: absolute; left: 0; right: 0; bottom: -1px; height: 2px; background: #7cacf8; }
  .more { margin-left: 7px; }
  .counters { margin-left: auto; display: flex; align-items: center; }
  .cnt { margin-left: 3px; font-size: 13px; }
  .msgicon { margin-left: 8px; }
  .countdiv { margin-left: 11px; }
  .gearbtn { margin-left: 4px; }
  .lastclose { margin-left: -3px; margin-right: 5px; }
  .nettools, .contools { height: 27px; flex: none; display: flex; align-items: center; border-bottom: 1px solid #5a5a5a; box-sizing: border-box; padding-left: 2px; color: #c7c7c7; }
  .lbl { white-space: nowrap; color: #c7c7c7; }
  .cb { width: 11px; height: 11px; border: 1px solid #8e8e8e; border-radius: 2px; flex: none; background: transparent; }
  .cb.checked { background: #7cacf8; border-color: #7cacf8; display: flex; align-items: center; justify-content: center; margin-right: 6px; }
  .preserve { margin-left: 5px; margin-right: 6px; }
  .cachediv { margin: 0 9px; }
  .throttle { margin-left: 15px; }
  .tri { margin-left: 23px; flex: none; }
  .wifi { margin-left: 10px; }
  .pushright { margin-left: auto; margin-right: 3px; }
  .nettools > .ib:last-child { margin-right: 5px; }
  .filterrow { height: 28px; flex: none; display: flex; align-items: center; }
  .filterinput { width: 190px; height: 20px; margin-left: 5px; background: #3c3c3c; border-radius: 10px; display: flex; align-items: center; padding-left: 11px; box-sizing: border-box; color: #c7c7c7; gap: 7px; }
  .invert { margin-left: 12px; margin-right: 6px; }
  .morediv { margin: 0 12px 0 11px; }
  .filterrow .tri { margin-left: 7px; }
  .chips { height: 21px; flex: none; display: flex; align-items: center; gap: 4px; padding-left: 4px; border-bottom: 1px solid #5a5a5a; }
  .chip { height: 20px; padding: 0 4.8px; padding-top: 1px; border: 1px solid #757575; border-radius: 7px; display: flex; align-items: center; font-size: 11px; font-weight: 500; color: #e3e3e3; white-space: nowrap; letter-spacing: 0; box-sizing: border-box; }
  .chip.all { background: #004a77; border-color: #004a77; color: #c2e7ff; font-weight: 700; }
  .chipdiv { height: 16px; }
  .timeline { height: 81px; flex: none; position: relative; border-bottom: 1px solid #5a5a5a; overflow: hidden; }
  .gridline { position: absolute; top: 0; bottom: 0; width: 1px; background: #5a5a5a; }
  .ticklabel { position: absolute; top: 4px; font-size: 10px; color: #e3e3e3; }
  .overbar { position: absolute; left: 159px; top: 21px; width: 652px; height: 11px; box-sizing: border-box; background: #4a4a4a; border: 2px solid #0b4a70; }
  .bar { position: absolute; height: 2px; }
  .marker { position: absolute; top: 21px; bottom: 0; width: 1px; }
  .marker.orange { left: 159px; background: #f28b54; }
  .marker.sky { left: 196px; background: #7cd0f5; }
  .handle { position: absolute; top: 0; bottom: 0; width: 2px; background: #0b6fa0; }
  .handle.left { left: 0; }
  .handle.right { right: 0; }
  .handle::before { content: ""; position: absolute; top: 1px; width: 4px; height: 16px; background: #0b4a70; border-radius: 2px; }
  .handle.right::before { right: 0; }

  .table { height: 336px; flex: none; display: flex; flex-direction: column; }
  .row { display: grid; grid-template-columns: 307px 151px 93px 153px 92px 1fr; height: 21px; align-items: stretch; flex: none; background: #292a2d; }
  .row.alt { background: #1f1f1f; }
  .row.selected { background: #533333; }
  .row > div { border-left: 1px solid #5a5a5a; padding: 0 4px; line-height: 25px; white-space: nowrap; min-width: 0; overflow: hidden; }
  .row > div:first-child { border-left: 0; }
  .row.head { height: 27px; border-bottom: 1px solid #5a5a5a; box-sizing: border-box; }
  .row.head > div { line-height: 28px; }
  .row.filler { height: 14px; background: #282828; border-bottom: 1px solid #5a5a5a; }
  .row > .namecell { display: flex; align-items: center; gap: 5px; padding: 2px 0 0 6px; box-sizing: border-box; line-height: 21px; }
  .namecell span { padding-top: 2px; }
  .right { text-align: right; }
  .other { color: #8a8a8a; }
  .lnk { text-decoration: underline; }
  .failed { color: #f2b8b5; }
  .statusbar { height: 27px; flex: none; display: flex; align-items: center; padding-left: 1px; border-bottom: 1px solid #5a5a5a; background: #282828; }
  .sitem { padding: 0 9px; height: 16px; line-height: 16px; border-right: 1px solid #5a5a5a; color: #c7c7c7; white-space: nowrap; }
  .sitem:last-child { border-right: 0; }
  .dcl { color: #f28b54; }
  .load { color: #5cc8e8; }
  .drawertabs { height: 26px; flex: none; display: flex; align-items: center; background: #3c3c3c; border-bottom: 1px solid #5a5a5a; padding-left: 2px; color: #c7c7c7; position: relative; }
  .dtab.drawer { padding: 0 9.5px; }
  .dtab.first { margin-left: -1px; }
  .flask { margin-left: 6px; }
  .whatsnew { margin-left: 15px; }
  .drawerclose { position: absolute; right: 10px; top: 7px; }
  .topctx { margin-left: 8px; }
  .contools .tri { margin-left: 5px; }
  .contools .levels + .tri { margin-left: 7px; }
  .topdiv { margin-left: 11px; }
  .eye { margin-left: 9px; }
  .eyediv { margin-left: 9px; }
  .confilter { width: 436px; height: 20px; margin-left: 7px; background: #3c3c3c; border-radius: 10px; display: flex; align-items: center; gap: 7px; padding-left: 11px; box-sizing: border-box; flex: none; }
  .levels { margin-left: 13px; }
  .levdiv { margin-left: 10px; }
  .issue { margin-left: auto; }
  .issueicon { margin-left: 7px; }
  .issuenum { margin-left: 1px; }
  .issuediv { margin-left: 11px; margin-right: 3px; }
  .contools > .ib:last-child { margin-right: 5px; }

  .conarea { flex: 1; min-height: 0; display: flex; overflow: hidden; }
  .messages { flex: 1; min-width: 0; padding: 0 4px; display: flex; flex-direction: column; justify-content: flex-end; gap: 4.3px; overflow: hidden; font: 11px/14.3px "DejaVu Sans Mono", monospace; letter-spacing: 0; color: #e3e3e3; }
  .msgblock { flex: none; background: #4e3534; border-radius: 0 0 5px 5px; padding-top: 2px; }
  .msgblock + .msgblock { border-radius: 5px; }
  .msgblock.single { padding-bottom: 1.5px; }
  .mline { display: flex; align-items: center; padding-left: 8px; }
  .expand { width: 0; height: 0; border-left: 6px solid #c7c7c7; border-top: 4px solid transparent; border-bottom: 4px solid transparent; margin: 0 3px 0 9px; flex: none; }
  .src { margin-left: auto; margin-right: 28px; }
  .src.net { margin-right: 7px; }
  .netic { margin-right: 30px; }
  .at { padding-left: 51px; white-space: pre; }
  a { color: #a8c7fa; text-decoration: underline; }
  .prompt { height: 37.7px; flex: none; padding: 5px 0 0 8px; box-sizing: border-box; }
  .scrollbar { width: 25px; flex: none; background: #3c3c3c; display: flex; flex-direction: column; align-items: center; }
  .up { margin-top: 11px; }
  .thumb { width: 21px; height: 117px; background: #686868; margin-top: 87px; }
  .down { margin-top: 9px; }

  /* taskbar */
  .taskbar { height: 60px; flex: none; background: #060a08; display: flex; position: relative; overflow: hidden; }
  .stripe { position: absolute; top: 0; bottom: 0; background: linear-gradient(90deg, transparent, rgba(30, 120, 50, .22), transparent); }
  .slot { width: 75px; height: 60px; display: flex; align-items: center; justify-content: center; position: relative; flex: none; }
  .slot.on::after { content: ""; position: absolute; left: 8px; right: 6px; bottom: 0; height: 3px; background: #4caf50; }
  .slot.active { background: rgba(255, 255, 255, .22); }
  .slot.active::after { left: 2px; right: 0; }
  .winlogo { margin-right: 3px; }
  .ij { width: 36px; height: 36px; background: linear-gradient(135deg, #e0457b 0, #7a5ae0 30%, #0a7ef5 60%); display: flex; align-items: center; justify-content: center; border-radius: 7px 3px 3px 7px; }
  .ijbox { width: 22px; height: 30px; background: #000; color: #fff; font: 700 12px "Liberation Mono", monospace; display: flex; flex-direction: column; padding: 2px 3px; box-sizing: border-box; justify-content: space-between; }
  .ijbox i { width: 9px; height: 2px; background: #fff; margin-bottom: 2px; }
  .tray { margin-left: auto; display: flex; align-items: center; position: relative; height: 60px; width: 466px; flex: none; }
  .t-chev { margin-left: 12px; }
  .t-spk { margin-left: 16px; }
  .t-shield { margin-left: 12px; }
  .t-mon { margin-left: 12px; }
  .t-kbd { margin-left: 12.5px; }
  .t-ime { margin-left: 12.5px; font: 24px "Noto Sans CJK SC", sans-serif; color: #f0f0f0; line-height: 1; }
  .t-pin { margin-left: 21px; width: 22px; height: 22px; background: #fff; color: #000; font: 19px/22px "Noto Sans CJK SC", sans-serif; text-align: center; }
  .clock { margin-left: 23px; width: 90px; text-align: center; font: 18px/27px Roboto, sans-serif; color: #e8e8e8; flex: none; }
  .notif { position: absolute; left: 404px; top: 18px; }
  .badge { position: absolute; left: 12px; top: 11px; width: 23px; height: 23px; border-radius: 50%; background: #333; border: 1px solid #777; box-sizing: border-box; color: #fff; font: 700 15px/21px Roboto, sans-serif; text-align: center; }
  .showdesk { position: absolute; right: 7px; top: 0; bottom: 0; width: 1px; background: #888; }
</style>
